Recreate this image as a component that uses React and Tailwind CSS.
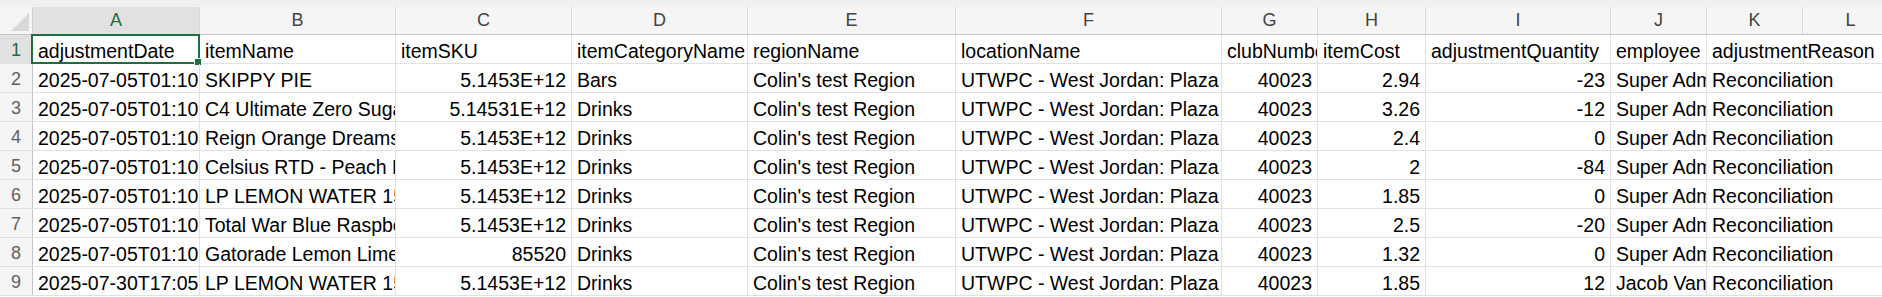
import React from 'react';

const font = { fontFamily: '"Liberation Sans", Arial, sans-serif' };

const cols = [
  { key: 'A', w: 'w-[167px]', align: 'left' },
  { key: 'B', w: 'w-[196px]', align: 'left' },
  { key: 'C', w: 'w-[176px]', align: 'right' },
  { key: 'D', w: 'w-[176px]', align: 'left' },
  { key: 'E', w: 'w-[208px]', align: 'left' },
  { key: 'F', w: 'w-[266px]', align: 'left' },
  { key: 'G', w: 'w-[96px]', align: 'right' },
  { key: 'H', w: 'w-[108px]', align: 'right' },
  { key: 'I', w: 'w-[185px]', align: 'right' },
  { key: 'J', w: 'w-[96px]', align: 'left' },
  { key: 'K', w: 'flex-1', align: 'left' },
];

const headerRow = [
  'adjustmentDate', 'itemName', 'itemSKU', 'itemCategoryName', 'regionName',
  'locationName', 'clubNumber', 'itemCost', 'adjustmentQuantity', 'employee', 'adjustmentReason',
];

const loc = 'UTWPC - West Jordan: Plaza Center';
const reg = "Colin's test Region";

const rows = [
  ['2025-07-05T01:10:22.000Z', 'SKIPPY PIE', '5.1453E+12', 'Bars', reg, loc, '40023', '2.94', '-23', 'Super Admin', 'Reconciliation'],
  ['2025-07-05T01:10:22.000Z', 'C4 Ultimate Zero Sugar Frozen Bombsicle', '5.14531E+12', 'Drinks', reg, loc, '40023', '3.26', '-12', 'Super Admin', 'Reconciliation'],
  ['2025-07-05T01:10:22.000Z', 'Reign Orange Dreamsicle', '5.1453E+12', 'Drinks', reg, loc, '40023', '2.4', '0', 'Super Admin', 'Reconciliation'],
  ['2025-07-05T01:10:22.000Z', 'Celsius RTD - Peach Mango', '5.1453E+12', 'Drinks', reg, loc, '40023', '2', '-84', 'Super Admin', 'Reconciliation'],
  ['2025-07-05T01:10:22.000Z', 'LP LEMON WATER 15oz', '5.1453E+12', 'Drinks', reg, loc, '40023', '1.85', '0', 'Super Admin', 'Reconciliation'],
  ['2025-07-05T01:10:22.000Z', 'Total War Blue Raspberry', '5.1453E+12', 'Drinks', reg, loc, '40023', '2.5', '-20', 'Super Admin', 'Reconciliation'],
  ['2025-07-05T01:10:22.000Z', 'Gatorade Lemon Lime 20oz', '85520', 'Drinks', reg, loc, '40023', '1.32', '0', 'Super Admin', 'Reconciliation'],
  ['2025-07-30T17:05:41.000Z', 'LP LEMON WATER 15oz', '5.1453E+12', 'Drinks', reg, loc, '40023', '1.85', '12', 'Jacob Vandermeer', 'Reconciliation'],
];

function Cell({ col, value, last, selected, textRow }) {
  const right = col.align === 'right' && !textRow;
  return (
    <div className={`${col.w} relative h-full shrink-0 ${last ? '' : 'border-r border-[#e1e1e1]'}`}>
      <div
        className={`h-full overflow-hidden whitespace-nowrap flex items-end pb-[2px] px-[5px] leading-[20px] text-[19.5px] text-black ${
          right ? 'justify-end' : 'justify-start'
        }`}
      >
        <span>{value}</span>
      </div>
      {selected && (
        <>
          <div className="absolute left-[-2px] top-[-1px] right-[-1px] bottom-[-1px] border-2 border-[#1e6e42] pointer-events-none" />
          <div className="absolute right-[-3px] bottom-[-3px] w-[6px] h-[6px] bg-[#1e6e42] border border-white box-content" />
        </>
      )}
    </div>
  );
}

function Row({ num, values, active }) {
  return (
    <div className="flex h-[29px] border-b border-[#e1e1e1]">
      <div
        className={`w-[33px] shrink-0 h-full flex items-end justify-center pb-[3px] text-[18px] leading-[20px] border-r border-[#c6c6c6] ${
          active ? 'bg-[#e1e1e1] text-[#1e6e42]' : 'bg-[#f5f5f5] text-[#616161]'
        }`}
      >
        {num}
      </div>
      {cols.map((c, i) => (
        <Cell
          key={c.key}
          col={c}
          value={values[i]}
          last={i === cols.length - 1}
          selected={active && i === 0}
          textRow={active}
        />
      ))}
    </div>
  );
}

export default function App() {
  const letters = ['A', 'B', 'C', 'D', 'E', 'F', 'G', 'H', 'I', 'J', 'K', 'L'];
  const headWidths = ['w-[167px]', 'w-[196px]', 'w-[176px]', 'w-[176px]', 'w-[208px]', 'w-[266px]', 'w-[96px]', 'w-[108px]', 'w-[185px]', 'w-[96px]', 'w-[96px]', 'w-[96px]'];

  return (
    <div className="w-[1882px] h-[297px] overflow-hidden bg-white" style={font}>
      {/* ribbon edge */}
      <div className="h-[7px] bg-[#f2f0ed]" />

      {/* column letters */}
      <div className="flex h-[28px] bg-[#f5f5f5] border-b border-[#c6c6c6]">
        <div className="w-[33px] shrink-0 h-full relative border-r border-[#d4d4d4]">
          <svg className="absolute right-[3px] bottom-[3px]" width="18" height="18" viewBox="0 0 18 18">
            <polygon points="18,0 18,18 0,18" fill="#d9d9d9" />
          </svg>
        </div>
        {letters.map((l, i) => (
          <div
            key={l}
            className={`${headWidths[i]} shrink-0 h-full flex items-end justify-center pb-[4px] text-[18px] leading-[20px] border-r border-[#d9d9d9] ${
              i === 0 ? 'bg-[#e1e1e1] text-[#1e6e42]' : 'text-[#444444]'
            }`}
          >
            {l}
          </div>
        ))}
      </div>

      <Row num={1} values={headerRow} active />
      {rows.map((r, i) => (
        <Row key={i} num={i + 2} values={r} />
      ))}
    </div>
  );
}
